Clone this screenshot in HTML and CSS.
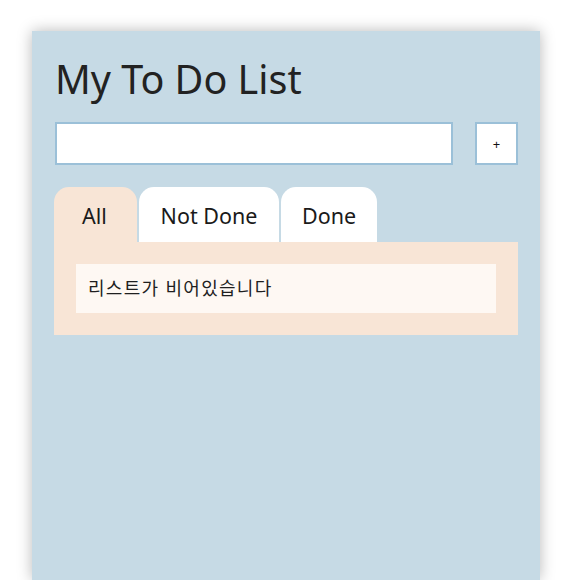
FILE: index.html
```html
<!DOCTYPE html>
<html lang="ko">
<head>
<meta charset="utf-8">
<title>My To Do List</title>
<link rel="stylesheet" href="styles.css">
</head>
<body>
<main class="card">
  <h1 class="title">My To Do List</h1>
  <div class="add-row">
    <input class="task-input" type="text">
    <button class="add-btn">+</button>
  </div>
  <div class="tabs">
    <div class="tab active">All</div>
    <div class="tab">Not Done</div>
    <div class="tab">Done</div>
  </div>
  <div class="panel">
    <div class="empty">리스트가 비어있습니다</div>
  </div>
</main>
</body>
</html>
```
FILE: styles.css
```css
html, body {
  margin: 0;
  padding: 0;
  background: #ffffff;
}
body {
  font-family: "Noto Sans", "Noto Sans CJK KR", sans-serif;
  color: #1f1f1f;
  padding: 31px 37px 0 32px;
  height: 580px;
  box-sizing: border-box;
  overflow: hidden;
}
.card {
  background: #c6dae5;
  box-shadow: 0 0 14px rgba(0, 0, 0, 0.28);
  clip-path: inset(-30px -30px 0 -30px);
  height: 549px;
  padding: 22px 22px 0 22px;
  box-sizing: border-box;
}
.title {
  margin: 0 0 0 1px;
  font-weight: 400;
  font-size: 39.5px;
  line-height: 52px;
  color: #222222;
}
.add-row {
  display: flex;
  gap: 22px;
  margin-top: 17px;
  padding-left: 1px;
}
.task-input {
  flex: 1;
  height: 43px;
  box-sizing: border-box;
  border: 2px solid #9bc0d8;
  background: #ffffff;
  margin: 0;
  padding: 0 8px;
  outline: none;
}
.add-btn {
  width: 43px;
  height: 43px;
  box-sizing: border-box;
  border: 2px solid #9bc0d8;
  background: #ffffff;
  margin: 0;
  padding: 0;
  font-family: "Noto Sans", sans-serif;
  font-size: 13px;
  color: #111111;
}
.tabs {
  display: flex;
  gap: 2px;
  margin-top: 22px;
}
.tab {
  height: 55px;
  box-sizing: border-box;
  background: #ffffff;
  border-radius: 15px 15px 0 0;
  font-size: 21.5px;
  line-height: 57px;
  text-align: center;
  color: #1a1a1a;
}
.tab.active {
  background: #f8e5d6;
  width: 83px;
  text-indent: -2px;
}
.tab:nth-child(2) { width: 140px; }
.tab:nth-child(3) { width: 96px; }
.panel {
  background: #f8e5d6;
  padding: 22px;
}
.empty {
  background: #fef8f3;
  height: 49px;
  line-height: 49px;
  padding: 0 12px;
  font-size: 18px;
  letter-spacing: 1.3px;
  color: #1f1f1f;
}
```
